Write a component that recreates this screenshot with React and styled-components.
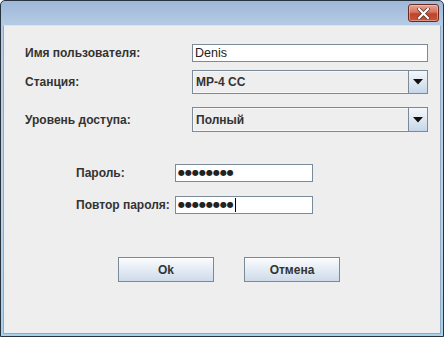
import React from "react";
import styled, { createGlobalStyle } from "styled-components";

const Global = createGlobalStyle`
  html, body { margin: 0; padding: 0; background: #ffffff; }
  body { font-family: "Liberation Sans", Arial, sans-serif; }
  * { box-sizing: border-box; }
`;

const Window = styled.div`
  width: 444px;
  height: 337px;
  border: 1px solid #26333f;
  border-radius: 5px 5px 0 0;
  background: linear-gradient(#9fb8d8 0px, #b5cbe5 24px, #bcd3ea 60%, #a8d0ea 100%);
  display: flex;
  flex-direction: column;
  padding: 0 2px 2px 2px;
  overflow: hidden;
`;

const TitleBar = styled.div`
  height: 24px;
  flex: none;
  display: flex;
  align-items: flex-start;
  justify-content: flex-end;
  padding: 3px 2px 0 0;
`;

const CloseButton = styled.div`
  width: 31px;
  height: 18px;
  border: 1px solid #6b2a20;
  border-radius: 3px;
  background: linear-gradient(#e3a595 0%, #d5735f 45%, #c04428 55%, #c8553b 100%);
  display: flex;
  align-items: center;
  justify-content: center;
  box-shadow: inset 0 0 0 1px rgba(255, 220, 210, 0.45);
`;

const Client = styled.div`
  flex: 1;
  background: #eeeeee;
  border: 1px solid #94a9c2;
  border-top-color: #d9e4f0;
  display: flex;
  flex-direction: column;
  padding: 18px 11px 0 21px;
`;

const Row = styled.div`
  display: grid;
  grid-template-columns: ${(p) => p.$labelWidth}px ${(p) => p.$fieldWidth}px;
  align-items: center;
  margin-top: ${(p) => p.$top || 0}px;
  margin-left: ${(p) => p.$indent || 0}px;
`;

const Label = styled.div`
  font-family: "Liberation Sans", Arial, sans-serif;
  font-weight: bold;
  font-size: 12px;
  color: #333333;
  white-space: nowrap;
`;

const TextField = styled.div`
  height: ${(p) => p.$h || 18}px;
  background: #ffffff;
  border: 1px solid #7a8a99;
  display: flex;
  align-items: center;
  padding-left: 2px;
  font-family: "Liberation Sans", Arial, sans-serif;
  font-size: 12.5px;
  color: #222222;
`;

const Dots = styled.span`
  font-family: "DejaVu Sans", sans-serif;
  font-size: 8px;
  letter-spacing: 0px;
  color: #222;
  line-height: 1;
`;

const Caret = styled.span`
  display: inline-block;
  width: 1px;
  height: 14px;
  background: #000;
  margin-left: 1px;
`;

const Combo = styled.div`
  height: ${(p) => p.$h}px;
  border: 1px solid #7a8a99;
  background: #eeeeee;
  display: flex;
  align-items: stretch;
  box-shadow: inset 0 0 0 1px #f8f8f8;
`;

const ComboText = styled.div`
  flex: 1;
  display: flex;
  align-items: center;
  padding-left: 3px;
  font-family: "Liberation Sans", Arial, sans-serif;
  font-weight: bold;
  font-size: 12px;
  color: #333333;
`;

const ArrowButton = styled.div`
  width: 19px;
  border-left: 1px solid #7a8a99;
  background: linear-gradient(#f4f7fb 0%, #dfe8f2 50%, #c6d6e8 100%);
  display: flex;
  align-items: center;
  justify-content: center;
`;

const ButtonBar = styled.div`
  display: flex;
  gap: 30px;
  margin-top: 43px;
  margin-left: 93px;
`;

const Button = styled.div`
  width: 96px;
  height: 25px;
  border: 1px solid #7a8a99;
  background: linear-gradient(#fbfcfe 0%, #e6edf5 45%, #cfdbea 100%);
  display: flex;
  align-items: center;
  justify-content: center;
  font-family: "Liberation Sans", Arial, sans-serif;
  font-weight: bold;
  font-size: 12px;
  color: #333333;
`;

const Triangle = () => (
  <svg width="10" height="6" viewBox="0 0 10 6">
    <path d="M0 0 H10 L5 5.5 Z" fill="#111" />
  </svg>
);

const CloseX = () => (
  <svg width="13" height="11" viewBox="0 0 13 11">
    <path
      d="M2 1 L11 10 M11 1 L2 10"
      stroke="#5a2a22"
      strokeWidth="3.6"
      strokeLinecap="square"
    />
    <path
      d="M2 1 L11 10 M11 1 L2 10"
      stroke="#ffffff"
      strokeWidth="2.2"
      strokeLinecap="square"
    />
  </svg>
);

export default function App() {
  return (
    <>
      <Global />
      <Window>
        <TitleBar>
          <CloseButton>
            <CloseX />
          </CloseButton>
        </TitleBar>
        <Client>
          <Row $labelWidth={167} $fieldWidth={236}>
            <Label>Имя пользователя:</Label>
            <TextField>Denis</TextField>
          </Row>
          <Row $labelWidth={167} $fieldWidth={236} $top={8}>
            <Label>Станция:</Label>
            <Combo $h={24}>
              <ComboText>MP-4 CC</ComboText>
              <ArrowButton>
                <Triangle />
              </ArrowButton>
            </Combo>
          </Row>
          <Row $labelWidth={167} $fieldWidth={236} $top={13}>
            <Label>Уровень доступа:</Label>
            <Combo $h={25}>
              <ComboText>Полный</ComboText>
              <ArrowButton>
                <Triangle />
              </ArrowButton>
            </Combo>
          </Row>
          <Row $labelWidth={99} $fieldWidth={138} $top={32} $indent={51}>
            <Label>Пароль:</Label>
            <TextField>
              <Dots>●●●●●●●●</Dots>
            </TextField>
          </Row>
          <Row $labelWidth={99} $fieldWidth={138} $top={14} $indent={51}>
            <Label>Повтор пароля:</Label>
            <TextField>
              <Dots>●●●●●●●●</Dots>
              <Caret />
            </TextField>
          </Row>
          <ButtonBar>
            <Button>Ok</Button>
            <Button>Отмена</Button>
          </ButtonBar>
        </Client>
      </Window>
    </>
  );
}
